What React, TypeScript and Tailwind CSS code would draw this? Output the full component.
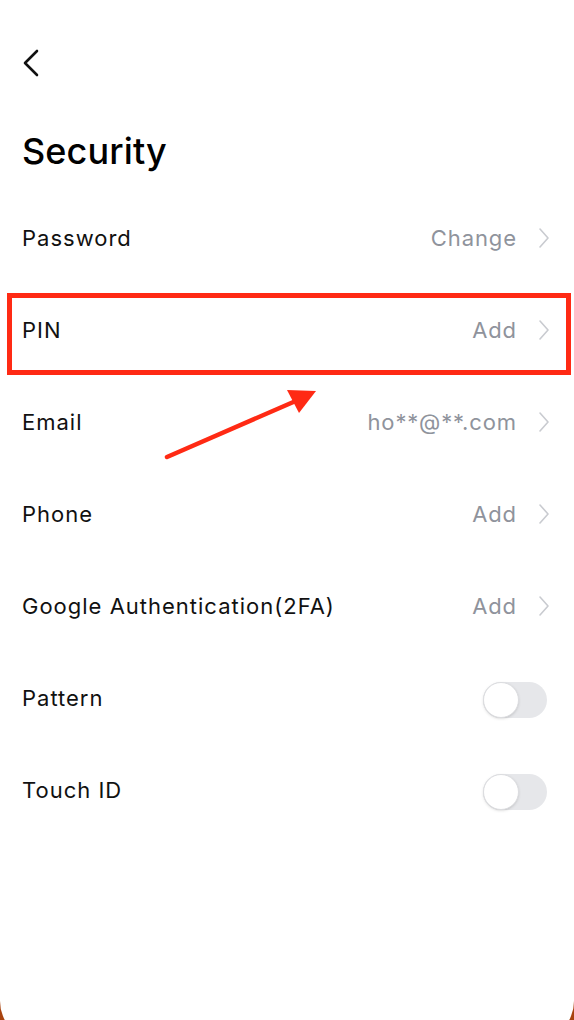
import React from "react";

const Chevron = () => (
  <svg width="12" height="22" viewBox="0 0 12 22" fill="none" className="shrink-0">
    <path d="M2 2 L10 11 L2 20" stroke="#c9cbd0" strokeWidth="1.6" strokeLinecap="round" strokeLinejoin="round" />
  </svg>
);

const Toggle = () => (
  <div className="w-[64px] h-[36px] rounded-full bg-[#e6e7ea] flex items-center">
    <div className="w-[36px] h-[36px] rounded-full bg-white border-[1.5px] border-[#dcdde0] shadow-sm" />
  </div>
);

type Row = { label: string; value?: string; toggle?: boolean };

const rows: Row[] = [
  { label: "Password", value: "Change" },
  { label: "PIN", value: "Add" },
  { label: "Email", value: "ho**@**.com" },
  { label: "Phone", value: "Add" },
  { label: "Google Authentication(2FA)", value: "Add" },
  { label: "Pattern", toggle: true },
  { label: "Touch ID", toggle: true },
];

export default function App() {
  return (
    <div className="w-[574px] h-[1020px] overflow-hidden bg-[#a8430f]">
      <div
        className="relative w-[574px] h-[1041px] bg-white rounded-b-[40px] text-[#111]"
        style={{ fontFamily: "Inter, 'Open Sans', sans-serif" }}
      >
        <div className="pt-[49px] pl-[22px]">
          <svg width="18" height="28" viewBox="0 0 18 28" fill="none">
            <path d="M15 2 L3 14 L15 26" stroke="#111" strokeWidth="2.6" strokeLinecap="round" strokeLinejoin="round" />
          </svg>
        </div>
        <h1 className="pl-[22px] mt-[52px] text-[36px] leading-[44px] font-medium tracking-[0.1px] text-black">
          Security
        </h1>
        <div className="mt-[19px]">
          {rows.map((r) => (
            <div key={r.label} className="h-[92px] flex items-center justify-between pl-[22px] pr-[24px]">
              <span className="text-[22px] leading-none tracking-[1px]">{r.label}</span>
              {r.toggle ? (
                <div className="pr-[3px] pt-[4px]">
                  <Toggle />
                </div>
              ) : (
                <div className="flex items-center gap-[21px]">
                  <span className="text-[22px] leading-none tracking-[0.9px] text-[#8f939c]">{r.value}</span>
                  <Chevron />
                </div>
              )}
            </div>
          ))}
        </div>

        <div className="absolute left-[7px] top-[293px] w-[564px] h-[82px] border-[5px] border-[#ff2a14]" />
        <svg className="absolute left-0 top-0" width="574" height="1020" viewBox="0 0 574 1020">
          <line x1="167" y1="457" x2="298" y2="400" stroke="#ff2a14" strokeWidth="4.5" strokeLinecap="round" />
          <polygon points="316,391 287,390 299,413" fill="#ff2a14" />
        </svg>
      </div>
    </div>
  );
}
